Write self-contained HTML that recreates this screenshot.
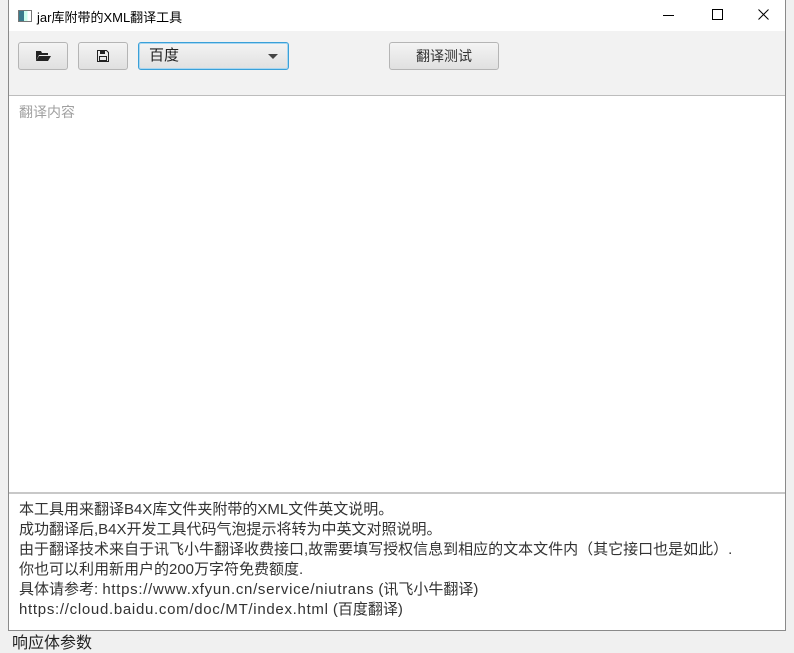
<!DOCTYPE html>
<html><head><meta charset="utf-8"><style>
body{margin:0;width:794px;height:639px;background:#f0f0f0;position:relative;overflow:hidden;font-family:"Liberation Sans","Noto Sans CJK SC",sans-serif}
.win{position:absolute;left:8px;top:0;width:778px;height:631px;background:#fff;border:1px solid #8a8a8a;border-top:none;box-sizing:border-box}
.title{position:absolute;left:0;top:0;width:100%;height:31px;background:#fff;font-size:13px;color:#000}
.title .t{position:absolute;left:28px;top:7px}
.ico{position:absolute;left:9px;top:10px;width:12px;height:10px;border:1px solid #777;background:linear-gradient(90deg,#3a7b8c 0 40%,#cfe 40% 70%,#fff 70%)}
.tool{position:absolute;left:0;top:31px;width:100%;height:64px;background:#f2f2f2;border-bottom:1px solid #bdbdbd}
.btn{position:absolute;top:11px;height:28px;border:1px solid #b5b5b5;border-radius:3px;background:linear-gradient(#f4f4f4,#e0e0e0);box-sizing:border-box;font-size:14px;text-align:center;line-height:26px;color:#333}
.area{position:absolute;left:0;top:96px;width:100%;height:398px;border-bottom:2px solid #c8c8c8;box-sizing:border-box}
.ph{position:absolute;left:10px;top:6px;font-size:14px;color:#a0a0a0}
.info{position:absolute;left:10px;top:500px;font-size:15px;line-height:20px;color:#333;white-space:nowrap}
.lat{letter-spacing:0.7px}
</style></head><body>
<div style="position:absolute;left:12px;top:629px;font-size:16px;color:#222">响应体参数</div>
<div class="win">
<div class="title"><div class="ico"></div><div class="t">jar库附带的XML翻译工具</div>
<div style="position:absolute;left:654px;top:15px;width:11px;height:1px;background:#000"></div>
<div style="position:absolute;left:703px;top:9px;width:9px;height:9px;border:1px solid #000"></div>
<svg style="position:absolute;left:749px;top:9px" width="11" height="11"><path d="M0.5 0.5L10.5 10.5M10.5 0.5L0.5 10.5" stroke="#000" stroke-width="1"/></svg></div>
<div class="tool">
<div class="btn" style="left:9px;width:50px"><svg width="16" height="12" viewBox="0 0 16 12" style="margin-top:7px"><path d="M1 1h5l1 2h6v2H4L1 11z" fill="#222"/><path d="M4 6h12l-3 5H1z" fill="#222"/></svg></div>
<div class="btn" style="left:69px;width:50px"><svg width="12" height="12" viewBox="0 0 12 12" style="margin-top:7px"><path d="M0.5 0.5h9l2 2v9h-11z" fill="none" stroke="#222"/><rect x="3" y="1" width="5" height="3" fill="#222"/><rect x="2.5" y="6.5" width="7" height="4" fill="none" stroke="#222"/></svg></div>
<div class="btn" style="left:129px;width:151px;border:1px solid #3aa0d8;box-shadow:0 0 0 1px #a8d6f0 inset;text-align:left;padding-left:10px;font-size:15px;color:#222">百度<span style="position:absolute;right:10px;top:11px;border-left:5px solid transparent;border-right:5px solid transparent;border-top:5px solid #444"></span></div>
<div class="btn" style="left:380px;width:110px">翻译测试</div>
</div>
<div class="area"><div class="ph">翻译内容</div></div>
<div class="info">本工具用来翻译B4X库文件夹附带的XML文件英文说明。<br>成功翻译后,B4X开发工具代码气泡提示将转为中英文对照说明。<br>由于翻译技术来自于讯飞小牛翻译收费接口,故需要填写授权信息到相应的文本文件内（其它接口也是如此）.<br>你也可以利用新用户的200万字符免费额度.<br>具体请参考: <span class="lat">https://www.xfyun.cn/service/niutrans</span> (讯飞小牛翻译)<br><span class="lat">https://cloud.baidu.com/doc/MT/index.html</span> (百度翻译)</div>
</div>
</body></html>
